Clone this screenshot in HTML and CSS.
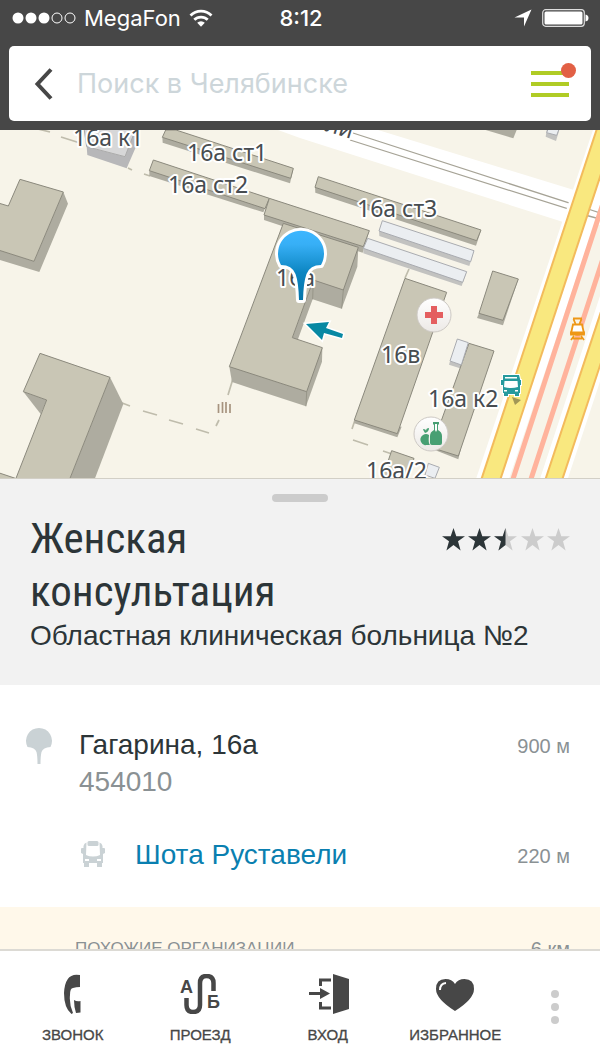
FILE: index.html
```html
<!DOCTYPE html>
<html lang="ru">
<head>
  <meta charset="UTF-8">
  <meta name="viewport" content="width=device-width, initial-scale=1.0">
  <title>Женская консультация</title>
  <link rel="stylesheet" href="styles.css">
</head>
<body>

  <header class="topbar">
    <div class="status">
      <div class="status-left">
        <svg width="64" height="12" viewBox="0 0 64 12" aria-hidden="true">
          <g fill="#fff">
            <circle cx="6" cy="6" r="5.5"/>
            <circle cx="19" cy="6" r="5.5"/>
            <circle cx="32" cy="6" r="5.5"/>
          </g>
          <g fill="none" stroke="#fff">
            <circle cx="45" cy="6" r="5"/>
            <circle cx="58" cy="6" r="5"/>
          </g>
        </svg>
        <span class="carrier">MegaFon</span>
        <svg width="24" height="18" viewBox="0 0 24 18" aria-hidden="true">
          <g fill="none" stroke="#fff" stroke-width="2.8">
            <path d="M1.500 6.500a15 15 0 0 1 21 0"/>
            <path d="M5.300 10.800a9.600 9.600 0 0 1 13.400 0"/>
          </g>
          <path d="M8.200 13.800a5.400 5.400 0 0 1 7.600 0L12 17.700z" fill="#fff"/>
        </svg>
      </div>
      <span class="time">8:12</span>
      <div class="status-right">
        <svg width="18" height="18" viewBox="0 0 18 18" aria-hidden="true">
          <path d="M17.500 .5L10 17.500V8.500H.5z" fill="#fff"/>
        </svg>
        <svg width="47" height="18" viewBox="0 0 47 18" aria-hidden="true">
          <rect x=".7" y=".7" width="41.600" height="16.600" rx="3" fill="none" stroke="#ddd" stroke-width="1.200"/>
          <rect x="2.500" y="2.500" width="38" height="13" rx="1.500" fill="#fff"/>
          <path d="M43.500 5.500q3 .5 3 3.500t-3 3.500z" fill="#fff"/>
        </svg>
      </div>
    </div>

    <form class="search">
      <button type="button" class="back" aria-label="Назад">
        <svg width="20" height="32" viewBox="0 0 20 32">
          <path d="M18 1.500L4.500 16L18 30.500" fill="none" stroke="#474747" stroke-width="4"/>
        </svg>
      </button>
      <input type="text" class="search-input" placeholder="Поиск в Челябинске" aria-label="Поиск в Челябинске">
      <button type="button" class="menu" aria-label="Меню">
        <span></span>
        <span></span>
        <span></span>
        <i class="badge"></i>
      </button>
    </form>
  </header>

  <svg class="map" viewBox="0 0 600 349" role="img" aria-label="Карта">
    <defs>
      <linearGradient id="pin" x1="0" y1="0" x2="0" y2="1">
        <stop offset="0" stop-color="#3db6ff"/>
        <stop offset=".2" stop-color="#37aff6"/>
        <stop offset=".6" stop-color="#0d86c2"/>
        <stop offset="1" stop-color="#0474a8"/>
      </linearGradient>
      <linearGradient id="disc" x1="0" y1="0" x2="0" y2="1">
        <stop offset="0" stop-color="#fff"/>
        <stop offset="1" stop-color="#ece9e6"/>
      </linearGradient>
    </defs>

    <!-- roads -->
    <path d="M278 0H378L600 68V104L560 91L300 8z" fill="#fff"/>
    <path d="M353 3L600 83M350 10L600 89" stroke="#a6a396" stroke-width="1.300"/>
    <path d="M593 0L476 349H545L600 184V0z" fill="#fff"/>
    <path d="M626 0L509 349H540L600 166V0z" fill="#f7f4e9"/>
    <path d="M582 71L600 76V95L578 88z" fill="#fff"/>
    <path d="M588 79L600 83M585 85L600 89" stroke="#a6a396" stroke-width="1.300"/>
    <path d="M627 0L513 349M645 0L531 349" stroke="#ffb39c" stroke-width="5"/>
    <path d="M607 -3L490 352" stroke="#f3bb5c" stroke-width="20"/>
    <path d="M607 -3L490 352" stroke="#f9e87f" stroke-width="16"/>
    <path d="M612 174L553 352" stroke="#fff" stroke-width="26"/>
    <path d="M612 174L553 352" stroke="#f3bb5c" stroke-width="18"/>
    <path d="M612 174L553 352" stroke="#f9e87f" stroke-width="14"/>

    <!-- fences -->
    <g fill="none" stroke="#bfbcac" stroke-width="1.700">
      <path d="M38 -1L50 2M61 7L80 13M128 38L132 40M144 44L150 46"/>
      <path d="M104 266L130 276M143 281L157 285M169 290L183 294M196 299L209 303"/>
      <path d="M235 242L228 265M219 290L216 296"/>
      <path d="M355 290L352 299M353 310L368 315M383 321L392 324M405 148L409 139"/>
    </g>

    <!-- buildings, drawn on a grid three times finer than the map -->
    <g transform="scale(.33333)" stroke-linejoin="round">
      <g fill="#aeaca0">
        <path d="M190 186L204 221L118 426L0 390V360L102 394z"/>
        <path d="M487 22L488 38L870 160L880 118z"/>
        <path d="M448 122V138L790 247L808 205z"/>
        <path d="M792 255V270L1088 368L1108 302z"/>
        <path d="M945 172L946 188L1428 347L1443 302z"/>
        <path d="M1075 352L1072 410L1025 536L938 508L893 630L877 623L940 450z"/>
        <path d="M688 710L696 756L918 829L966 695L967 653z"/>
        <path d="M1437 550L1431 564L1509 586L1555 447z"/>
        <path d="M1063 870V880L1192 922L1205 890z"/>
        <path d="M1300 953L1310 962L1375 988L1382 960z"/>
        <path d="M330 742L370 822L283 1050H208z"/>
        <path d="M70 785L122 852L140 810z"/>
        <path d="M1465 0H1550L1540 25L1457 0z"/>
      </g>
      <path d="M1030 480L1025 536M940 450L938 508M920 785L918 829" stroke="#8b897c" stroke-width="2"/>
      <path d="M260 50L262 75L380 115L408 50L403 0L375 80z" fill="#b7b7b9"/>
      <g fill="#c2c2c0">
        <path d="M1137 303L1138 318L1408 408L1422 362z"/>
        <path d="M1090 355V370L1385 468L1400 425z"/>
        <path d="M1350 693L1347 704L1380 715L1384 705z"/>
        <path d="M1640 0L1637 20L1668 33L1678 0z"/>
      </g>
      <g fill="#c9c6b5" stroke="#8b897c" stroke-width="3">
        <path d="M-5 219L25 228L60 148L190 186L102 394L-5 360z"/>
        <path d="M497 0L487 22L872 145L880 115L528 0z"/>
        <path d="M460 90L808 205L795 236L448 122z"/>
        <path d="M850 280L1075 352L1030 480L940 450L877 623L967 653L920 785L688 710z"/>
        <path d="M808 205L1108 302L1090 350L792 255z"/>
        <path d="M955 140L1443 300L1430 332L945 172z"/>
        <path d="M1478 423L1555 447L1509 571L1437 550z"/>
        <path d="M1215 445L1340 487L1192 911L1063 870z"/>
        <path d="M1407 640L1482 663L1375 978L1295 953z"/>
        <path d="M1175 962L1242 985L1225 1050H1145z"/>
        <path d="M120 670L330 742L208 1050H46L140 810L70 785z"/>
        <path d="M-5 1028L46 1045V1060H-5z"/>
      </g>
      <path d="M252 -5L260 50L375 80L408 -5z" fill="#d7d7d8" stroke="#aaa" stroke-width="3"/>
      <g fill="#ebeef1" stroke="#a9abb0" stroke-width="3">
        <path d="M1147 272L1422 362L1412 395L1137 303z"/>
        <path d="M1103 325L1400 425L1388 457L1090 355z"/>
        <path d="M1372 627L1405 638L1384 705L1350 693z"/>
        <path d="M1285 1000L1318 1012L1305 1045L1275 1035z"/>
        <path d="M1645 -5L1640 8L1670 16L1678 -5z"/>
      </g>
    </g>

    <!-- gate -->
    <path d="M218.500 274V283M222.500 272V283M226 272V283M230 274V283" stroke="#a6937f" stroke-width="1.700"/>

    <g class="map-labels">
      <text x="351" y="9" text-anchor="end" transform="rotate(17 351 9)">ели</text>
      <text x="73" y="16">16а к1</text>
      <text x="187" y="31">16а ст1</text>
      <text x="168" y="63">16а ст2</text>
      <text x="357" y="87">16а ст3</text>
      <text x="276" y="156">16а</text>
      <text x="381" y="233">16в</text>
      <text x="428" y="277">16а к2</text>
      <text x="366" y="349">16а/2</text>
    </g>

    <!-- clinic -->
    <circle cx="434" cy="185" r="17" fill="url(#disc)" stroke="#cdc9c4"/>
    <path d="M431 176h6v6h6v6h-6v6h-6v-6h-6v-6h6z" fill="#e45e60"/>

    <!-- grocery -->
    <circle cx="431" cy="304" r="17" fill="url(#disc)" stroke="#cdc9c4"/>
    <g fill="#479f73">
      <path d="M433 292h6v2l-1 1v5q4 2 4 6v7q0 2-2 2h-8q-2 0-2-2v-7q0-4 4-6v-5l-1-1z"/>
      <path d="M429 305q-3-2-6 0q-4 3-2 7q2 4 5 3h4q-2-2-1-10z"/>
      <path d="M425 303q-2-3-2-4q3 0 3 2q0-3 3-3q0 4-4 5z"/>
    </g>
    <path d="M435 294h2v6l-1 2l-1-2z" fill="#fff"/>

    <!-- bus stop -->
    <path d="M512 267L521 270L515 275z" fill="#a29756"/>
    <g fill="#269a9d" stroke="#fff" stroke-width="2" paint-order="stroke">
      <path d="M503 245h16l1 4v1h1v5h-1v8h-1v3h-4v-2h-7v2h-4v-3h-1v-8h-2v-5h2z"/>
    </g>
    <path d="M504.500 251h13l.5 6q-7 2-14 0zM505 247h12v1.500h-12zM504 260h3v1.500h-3zM515 260h3v1.500h-3z" fill="#fff"/>

    <!-- tram stop -->
    <g fill="none" stroke="#ee9716" stroke-width="1.800">
      <path d="M573 188.500h9M575.500 194l-2-5M579.500 194l2-5"/>
      <path d="M573 194.500h9l2 9q-6.500 2-13 0z" fill="#fff"/>
      <path d="M571 202.500h13v2h-13zM574 206l-3 4M581 206l3 4M573 208.500h9"/>
    </g>

    <path d="M306 194L329 192L326 198L343 204L342 208L324 203L322 210z" fill="#0788a3" stroke="#fff" stroke-width="3" paint-order="stroke"/>
    <path d="M281 135A23 23 0 1 1 321 135Q310 135 306.500 144Q303.500 152 303 170H299Q298.500 152 295.500 144Q292 135 281 135z" fill="url(#pin)" stroke="#fff" stroke-width="6" paint-order="stroke" stroke-linejoin="round"/>
    <path d="M0 348.500H600" stroke="#d2cfc6"/>
  </svg>

  <main class="card">
    <section class="card-head">
      <div class="handle"></div>
      <div class="title-row">
        <h1>Женская консультация</h1>
        <svg class="rating" width="128" height="24" viewBox="0 0 128 24" role="img" aria-label="Оценка 2,5 из 5">
          <defs>
            <path id="star" d="M11.500 0L14.300 8.200H23L16 13.300L18.600 22.500L11.500 17.100L4.400 22.500L7 13.300L0 8.200H8.700z"/>
            <clipPath id="half"><path d="M0 0H11.500V24H0z"/></clipPath>
          </defs>
          <g fill="#2c3538">
            <use href="#star"/>
            <use href="#star" x="26"/>
          </g>
          <g fill="#ccc">
            <use href="#star" x="52"/>
            <use href="#star" x="79"/>
            <use href="#star" x="105"/>
          </g>
          <g transform="translate(52 0)"><use href="#star" fill="#2c3538" clip-path="url(#half)"/></g>
        </svg>
      </div>
      <p class="subtitle">Областная клиническая больница №2</p>
    </section>

    <section class="places">
      <div class="place">
        <svg class="pin-icon" width="26" height="38" viewBox="0 0 26 38" aria-hidden="true">
          <path d="M1.500 21A13 13 0 1 1 24.500 21Q17 21.500 15.500 26Q14.500 30 14.500 38H11.500Q11.500 30 10.500 26Q9 21.500 1.500 21z" fill="#cad2d5"/>
        </svg>
        <div class="address">
          <div>Гагарина, 16а</div>
          <div class="postcode">454010</div>
        </div>
        <span class="distance">900 м</span>
      </div>
      <div class="place stop">
        <svg class="bus-icon" width="24" height="27" viewBox="0 0 24 27" aria-hidden="true">
          <g fill="#cad2d5">
            <rect x="6.500" y="0" width="11" height="5" rx="1.500"/>
            <path d="M5.500 1.500L5 14Q12 17 19 14L18.500 1.500Q21 2 21.500 5V7H23Q24 7 24 8V12L22 13V22H2V13L0 12V8Q0 7 1 7H2.500V5Q3 2 5.500 1.500z"/>
            <path d="M3 21H8V26H3zM16 21H21V26H16z"/>
          </g>
          <path d="M6.500 6H17.500L18 14Q12 16 6 14z" fill="#fff"/>
          <path d="M4 18h4v2H4zM16 18h4v2h-4z" fill="#fff"/>
        </svg>
        <a href="#stop">Шота Руставели</a>
        <span class="distance">220 м</span>
      </div>
    </section>

    <section class="similar">
      <h2>ПОХОЖИЕ ОРГАНИЗАЦИИ</h2>
      <span class="distance">6 км</span>
    </section>
  </main>

  <nav class="tabs">
    <button type="button" class="tab">
      <svg width="40" height="40" viewBox="0 0 40 40" aria-hidden="true">
        <path d="M27 1Q12 -2 11 19Q11 34 18.500 40L20 39Q16 30 17 21Q17 14 20 14Q23 13 27 13z" fill="#474747"/>
        <path d="M21 26Q24 28 27.500 27V38.500L23 39Q21 33 21 26z" fill="#474747"/>
      </svg>
      ЗВОНОК
    </button>
    <button type="button" class="tab">
      <svg class="route-icon" width="40" height="40" viewBox="0 0 40 40" aria-hidden="true">
        <path d="M6.500 24V31Q6.500 38 13 38Q20 38 20 31V9Q20 2 26.500 2Q33.500 2 33.500 9V17" fill="none" stroke="#474747" stroke-width="4.500"/>
        <text x="0" y="19">А</text>
        <text x="27" y="34">Б</text>
      </svg>
      ПРОЕЗД
    </button>
    <button type="button" class="tab">
      <svg width="42" height="40" viewBox="0 0 42 40" aria-hidden="true">
        <path d="M26 0L42 5V35L26 40z" fill="#474747"/>
        <path d="M13.500 12V6H24M13.500 28V34H24" fill="none" stroke="#474747" stroke-width="3"/>
        <path d="M2 18H13V14L23 19.500L13 25V21H2z" fill="#474747"/>
      </svg>
      ВХОД
    </button>
    <button type="button" class="tab">
      <svg width="40" height="40" viewBox="0 0 40 40" aria-hidden="true">
        <path d="M20 37Q1 25 1 15Q1 5 10.500 5Q17 5 20 10Q23 5 29.500 5Q39 5 39 15Q39 25 20 37z" fill="#474747"/>
        <path d="M5 16Q5 9.500 11 9" fill="none" stroke="#fff" stroke-width="2"/>
      </svg>
      ИЗБРАННОЕ
    </button>
    <button type="button" class="more" aria-label="Ещё">
      <span></span>
      <span></span>
      <span></span>
    </button>
  </nav>

</body>
</html>
```

FILE: styles.css
```css
* {
  box-sizing: border-box;
}

body {
  font-family: 'Liberation Sans', Arial, sans-serif;
  font-size: 28px;
  color: #2c3538;
  background: #fff;
  margin: 0;
  display: flex;
  flex-direction: column;
  height: 100vh;
  overflow: hidden;
}

button {
  font-family: inherit;
  background: none;
  border: none;
  padding: 0;
  cursor: pointer;
}

svg {
  display: block;
  flex: none;
}

.topbar {
  background: #474747;
  padding: 0 9px 9px;
}

.status {
  display: grid;
  grid-template-columns: 1fr auto 1fr;
  align-items: center;
  height: 36px;
  margin-bottom: 10px;
  padding-right: 2px;
  font-family: Inter, sans-serif;
  font-size: 22px;
  color: #fff;
}

.status-left,
.status-right {
  display: flex;
  align-items: center;
}

.status-left {
  gap: 8px;
  padding-left: 3px;
}

.status-right {
  justify-content: flex-end;
  gap: 10px;
}

.time {
  padding-left: 4px;
  font-weight: 500;
}

.search {
  display: flex;
  align-items: center;
  height: 75px;
  margin: 0;
  padding: 0 22px 0 24px;
  background: #fff;
  border-radius: 5px;
}

.search-input {
  flex: 1;
  min-width: 0;
  margin-left: 24px;
  padding: 0;
  border: none;
  outline: none;
  font-family: Inter, sans-serif;
  font-size: 27px;
}

.search-input::placeholder {
  color: #cdd6da;
  opacity: 1;
}

.menu {
  position: relative;
  display: flex;
  flex-direction: column;
  gap: 7px;
  width: 38px;
}

.menu span {
  height: 4px;
  background: #b0cc25;
}

.badge {
  position: absolute;
  top: -8px;
  right: -7px;
  width: 15px;
  height: 15px;
  border-radius: 50%;
  background: #e26045;
}

.map {
  width: 100%;
  height: auto;
  background: #f7f4e9;
}

.map-labels {
  font-family: 'Noto Sans', sans-serif;
  font-size: 23px;
  fill: #474c50;
  stroke: #fff;
  stroke-width: 4px;
  stroke-linejoin: round;
  paint-order: stroke;
}

.card {
  flex: 1;
  min-height: 0;
  overflow: hidden;
}

.card-head {
  padding: 15px 30px 32px;
  background: #f2f2f2;
}

.handle {
  width: 56px;
  height: 8px;
  margin: 0 auto 10px;
  border-radius: 4px;
  background: #ccc;
}

.title-row {
  display: flex;
  justify-content: space-between;
}

.title-row h1 {
  width: 320px;
  margin: 0;
  font-family: 'Roboto Condensed', 'Liberation Sans Narrow', sans-serif;
  font-size: 43px;
  font-weight: normal;
  line-height: 53px;
}

.rating {
  margin-top: 16px;
}

.subtitle {
  margin: 0;
  line-height: 35px;
}

.places {
  padding: 41px 30px 31px 26px;
}

.place {
  display: flex;
  align-items: flex-start;
  line-height: 37px;
}

.address {
  flex: 1;
  margin-left: 27px;
}

.postcode {
  color: #8a9194;
}

.stop {
  margin-top: 36px;
  padding-left: 55px;
}

.bus-icon {
  margin-top: 5px;
}

.stop a {
  flex: 1;
  margin-left: 30px;
  color: #0a7fb0;
  text-decoration: none;
}

.distance {
  font-size: 20px;
  line-height: 40px;
  color: #8a9194;
}

.similar {
  display: flex;
  justify-content: space-between;
  padding: 22px 30px 22px 75px;
  background: #fff8ea;
}

.similar h2 {
  margin: 0;
  font-size: 17px;
  font-weight: normal;
  line-height: 40px;
  color: #8a9194;
}

.tabs {
  display: flex;
  flex: none;
  height: 114px;
  padding: 0 9px;
  background: #fff;
  border-top: 2px solid #dcdad4;
}

.tab {
  display: flex;
  flex: 1;
  flex-direction: column;
  align-items: center;
  gap: 11px;
  padding-top: 23px;
  font-size: 15px;
  line-height: 20px;
  color: #474747;
  -webkit-text-stroke: 0.3px #474747;
}

.route-icon text {
  font-size: 18px;
  font-weight: bold;
  fill: #474747;
}

.more {
  display: flex;
  flex-direction: column;
  align-items: center;
  justify-content: center;
  gap: 5px;
  width: 72px;
}

.more span {
  width: 8px;
  height: 8px;
  border-radius: 50%;
  background: #ccc;
}
```
